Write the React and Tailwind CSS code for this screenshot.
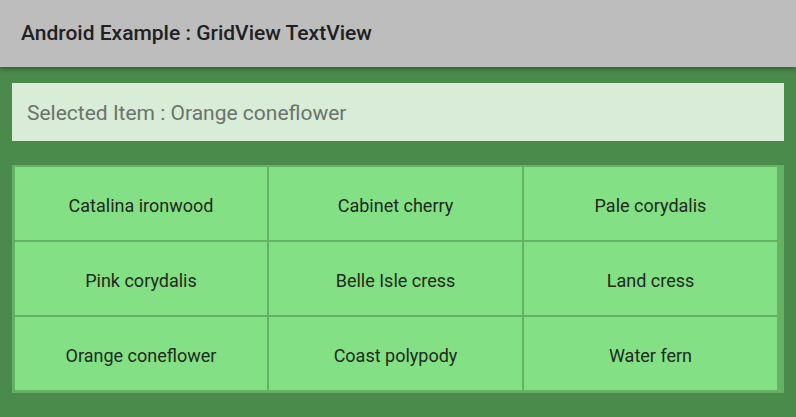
import React from "react";

const items = [
  "Catalina ironwood",
  "Cabinet cherry",
  "Pale corydalis",
  "Pink corydalis",
  "Belle Isle cress",
  "Land cress",
  "Orange coneflower",
  "Coast polypody",
  "Water fern",
];

export default function App() {
  return (
    <div
      className="w-[796px] h-[417px] bg-[#4a8a4a] flex flex-col overflow-hidden"
      style={{ fontFamily: "Roboto, 'Noto Sans', sans-serif" }}
    >
      <div className="h-[67px] shrink-0 bg-[#bdbdbd] flex items-center px-[21px] shadow-[0_2px_5px_rgba(0,0,0,0.35)] relative z-10">
        <span className="text-[21px] font-medium text-[#212121] leading-none">
          Android Example : GridView TextView
        </span>
      </div>
      <div className="flex flex-col px-[12px] pt-[16px]">
        <div className="h-[58px] bg-[#d9ecd8] flex items-center px-[15px] pt-[3px]">
          <span className="text-[21px] text-[#6b736b]">
            Selected Item : Orange coneflower
          </span>
        </div>
        <div className="mt-[24px] bg-[#65b265] pt-[2px] pl-[3px] pr-[5px] pb-[3px] grid grid-cols-[252px_253px_253px] gap-[2px]">
          {items.map((t) => (
            <div
              key={t}
              className="h-[73px] bg-[#84e084] flex items-center justify-center pt-[3px] text-[18px] text-[#1e2a1e]"
            >
              {t}
            </div>
          ))}
        </div>
      </div>
    </div>
  );
}
